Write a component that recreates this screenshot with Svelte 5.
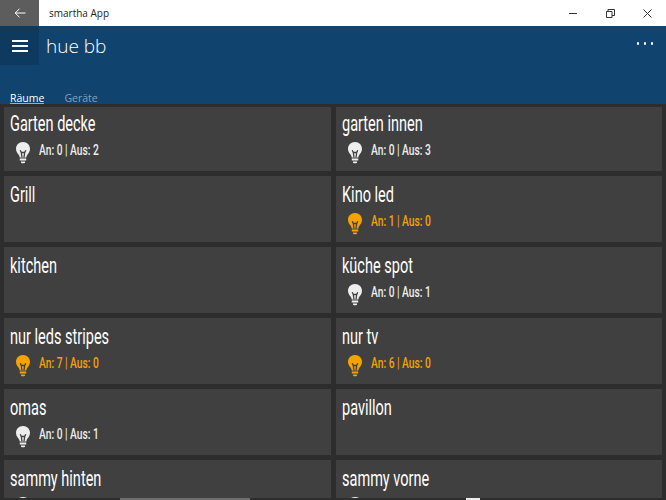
<script>
  const rooms = [
    { name: 'Garten decke', on: 0, off: 2 },
    { name: 'garten innen', on: 0, off: 3 },
    { name: 'Grill' },
    { name: 'Kino led', on: 1, off: 0 },
    { name: 'kitchen' },
    { name: 'küche spot', on: 0, off: 1 },
    { name: 'nur leds stripes', on: 7, off: 0 },
    { name: 'nur tv', on: 6, off: 0 },
    { name: 'omas', on: 0, off: 1 },
    { name: 'pavillon' },
    { name: 'sammy hinten', on: 0, off: 1 },
    { name: 'sammy vorne', on: 0, off: 1 }
  ];
</script>

<div class="window">
  <header class="titlebar">
    <div class="back">
      <svg width="12" height="10" viewBox="0 0 12 10"><path d="M11.500 5H1M5.500 .7 1.200 5l4.300 4.300" fill="none" stroke="#fff" stroke-width="1"/></svg>
    </div>
    <span class="apptitle">smartha App</span>
    <div class="controls">
      <svg width="9" height="9" viewBox="0 0 9 9"><path d="M0 4.500h8" stroke="#333" fill="none"/></svg>
      <svg width="9" height="9" viewBox="0 0 9 9"><path d="M.5 2.500h5.500v6H.5zM2 2.500v-2h6.500v6h-2.500" stroke="#333" fill="none"/></svg>
      <svg width="9" height="9" viewBox="0 0 9 9"><path d="M.5.500l8 8M8.500 .5l-8 8" stroke="#333" fill="none"/></svg>
    </div>
  </header>

  <section class="appbar">
    <div class="toprow">
      <div class="burger"><span></span><span></span><span></span></div>
      <h1>hue bb</h1>
      <div class="more"><i></i><i></i><i></i></div>
    </div>
    <nav class="tabs">
      <span class="tab active">Räume</span>
      <span class="tab">Geräte</span>
    </nav>
  </section>

  <main class="grid">
    {#each rooms as room}
      <article class="card">
        <div class="name"><span>{room.name}</span></div>
        {#if room.on !== undefined}
          <div class="status" class:lit={room.on > 0}>
            <svg class="bulb" width="16" height="22" viewBox="0 0 16 22">
              <path d="M8 0C3.800 0 1 3 1 6.800c0 2.600 1.200 4.100 2.300 5.500.8 1 1.300 1.900 1.400 3.200h6.600c.1-1.300.6-2.200 1.400-3.200 1.100-1.400 2.300-2.900 2.300-5.500C15 3 12.200 0 8 0Z"/>
              <path class="filament" d="M7 15.500 6.300 10.500 5.200 8.200M9 15.500l.7-5 1.100-2.300M6.300 10.500h3.400"/>
              <path d="M4.800 16.500h6.400v2H4.800zM6 19.500h4v1.200q-2 1.300-4 0z"/>
            </svg>
            <span class="label"><span>An: {room.on} | Aus: {room.off}</span></span>
          </div>
        {/if}
      </article>
    {/each}
  </main>

  <div class="bottom"><div class="scroll"></div><div class="thumb"></div></div>
</div>

<style>
  :global(body) {
    margin: 0;
    background: #2d2d2d;
  }
  .window {
    position: relative;
    width: 666px;
    height: 500px;
    overflow: hidden;
    display: flex;
    flex-direction: column;
    background: #2d2d2d;
    font-family: "Roboto", "Liberation Sans", sans-serif;
  }
  .titlebar {
    flex: 0 0 26px;
    display: flex;
    align-items: center;
    background: #fff;
  }
  .back {
    width: 39px;
    height: 26px;
    background: #5d5d5d;
    display: flex;
    align-items: center;
    justify-content: center;
  }
  .apptitle {
    margin-left: 10px;
    font: 10px "Open Sans", "Liberation Sans", sans-serif;
    color: #222;
  }
  .controls {
    margin-left: auto;
    display: flex;
    gap: 28px;
    padding-right: 14px;
  }
  .appbar {
    flex: 0 0 78px;
    background: #10446f;
    display: flex;
    flex-direction: column;
    position: relative;
    z-index: 1;
    box-shadow: 0 3px 0 #2d2d2d;
  }
  .toprow {
    display: flex;
    height: 39px;
    align-items: center;
  }
  .burger {
    width: 39px;
    height: 39px;
    background: #0f3a60;
    display: flex;
    flex-direction: column;
    justify-content: center;
    align-items: center;
    gap: 3px;
  }
  .burger span {
    width: 16px;
    height: 2px;
    background: #fff;
  }
  h1 {
    margin: 1px 0 0 7px;
    font: 300 19px "Open Sans", "Liberation Sans", sans-serif;
    color: #fff;
  }
  .more {
    margin-left: auto;
    display: flex;
    gap: 4.500px;
    padding: 0 13px 4px 0;
  }
  .more i {
    width: 2.500px;
    height: 2.500px;
    border-radius: 50%;
    background: #fff;
  }
  .tabs {
    margin-top: auto;
    display: flex;
    gap: 20px;
    padding-left: 10px;
    height: 13px;
    overflow: hidden;
    font: 10.500px/15px "Open Sans", "Liberation Sans", sans-serif;
    color: #8aa0b4;
  }
  .tab.active {
    color: #fff;
    border-bottom: 1px solid #aaa;
  }
  .grid {
    flex: 1;
    min-height: 0;
    display: grid;
    grid-template-columns: 327px 326px;
    grid-auto-rows: 66px;
    column-gap: 5px;
    row-gap: 5px;
    padding: 1px 0 0 4px;
    align-content: start;
  }
  .card {
    background: #404040;
    color: #fff;
    min-width: 0;
  }
  .name {
    padding: 6px 0 0 6px;
    height: 26px;
    font-size: 22px;
    line-height: 26px;
    white-space: nowrap;
  }
  .name span, .label span {
    display: inline-block;
    transform: scaleX(0.66);
    transform-origin: left center;
  }
  .status {
    display: flex;
    align-items: center;
    height: 22px;
    margin-top: 2px;
    padding-left: 11px;
    color: #eee;
  }
  .bulb {
    fill: #eee;
    margin-top: 5px;
    flex: none;
  }
  .filament {
    fill: none;
    stroke: #404040;
    stroke-width: 1.300;
  }
  .label {
    margin-left: 8px;
    font-size: 15.500px;
    font-weight: 500;
    white-space: nowrap;
  }
  .lit {
    color: #f5a300;
  }
  .lit .bulb {
    fill: #f5a300;
  }
  .bottom {
    flex: 0 0 2px;
    display: flex;
    background: #2d2d2d;
    position: relative;
    z-index: 1;
  }
  .scroll {
    margin-left: 120px;
    width: 130px;
    background: #6e6e6e;
  }
  .thumb {
    margin-left: 216px;
    width: 14px;
    background: #eee;
  }
</style>
